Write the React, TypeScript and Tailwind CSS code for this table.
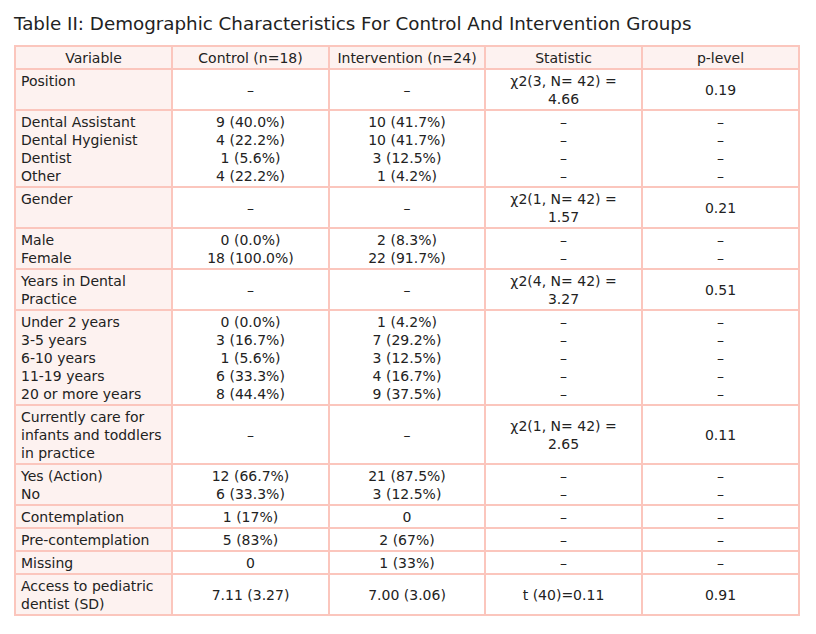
import React from "react";

type Row = {
  label: string[];
  control: string[];
  intervention: string[];
  statistic: string[];
  p: string[];
};

const D = "–";

const rows: Row[] = [
  { label: ["Position"], control: [D], intervention: [D], statistic: ["χ2(3, N= 42) =", "4.66"], p: ["0.19"] },
  {
    label: ["Dental Assistant", "Dental Hygienist", "Dentist", "Other"],
    control: ["9 (40.0%)", "4 (22.2%)", "1 (5.6%)", "4 (22.2%)"],
    intervention: ["10 (41.7%)", "10 (41.7%)", "3 (12.5%)", "1 (4.2%)"],
    statistic: [D, D, D, D],
    p: [D, D, D, D],
  },
  { label: ["Gender"], control: [D], intervention: [D], statistic: ["χ2(1, N= 42) =", "1.57"], p: ["0.21"] },
  {
    label: ["Male", "Female"],
    control: ["0 (0.0%)", "18 (100.0%)"],
    intervention: ["2 (8.3%)", "22 (91.7%)"],
    statistic: [D, D],
    p: [D, D],
  },
  { label: ["Years in Dental", "Practice"], control: [D], intervention: [D], statistic: ["χ2(4, N= 42) =", "3.27"], p: ["0.51"] },
  {
    label: ["Under 2 years", "3-5 years", "6-10 years", "11-19 years", "20 or more years"],
    control: ["0 (0.0%)", "3 (16.7%)", "1 (5.6%)", "6 (33.3%)", "8 (44.4%)"],
    intervention: ["1 (4.2%)", "7 (29.2%)", "3 (12.5%)", "4 (16.7%)", "9 (37.5%)"],
    statistic: [D, D, D, D, D],
    p: [D, D, D, D, D],
  },
  {
    label: ["Currently care for", "infants and toddlers", "in practice"],
    control: [D],
    intervention: [D],
    statistic: ["χ2(1, N= 42) =", "2.65"],
    p: ["0.11"],
  },
  {
    label: ["Yes (Action)", "No"],
    control: ["12 (66.7%)", "6 (33.3%)"],
    intervention: ["21 (87.5%)", "3 (12.5%)"],
    statistic: [D, D],
    p: [D, D],
  },
  { label: ["Contemplation"], control: ["1 (17%)"], intervention: ["0"], statistic: [D], p: [D] },
  { label: ["Pre-contemplation"], control: ["5 (83%)"], intervention: ["2 (67%)"], statistic: [D], p: [D] },
  { label: ["Missing"], control: ["0"], intervention: ["1 (33%)"], statistic: [D], p: [D] },
  {
    label: ["Access to pediatric", "dentist (SD)"],
    control: ["7.11 (3.27)"],
    intervention: ["7.00 (3.06)"],
    statistic: ["t (40)=0.11"],
    p: ["0.91"],
  },
];

const Lines = ({ items }: { items: string[] }) => (
  <>
    {items.map((t, i) => (
      <div key={i} className="whitespace-nowrap">{t}</div>
    ))}
  </>
);

const cell = "border-2 border-[#fbc6bd] px-[5px] pt-[2px] pb-[1px]";

export default function App() {
  return (
    <div
      className="bg-white text-[#222222] pl-[14px] pt-[12px]"
      style={{ fontFamily: '"DejaVu Sans", Verdana, sans-serif' }}
    >
      <h1 className="text-[18.3px] leading-[23px] mb-[10px]">
        Table II: Demographic Characteristics For Control And Intervention Groups
      </h1>
      <table className="table-fixed border-collapse w-[785px] text-[14px] leading-[18px]">
        <colgroup>
          <col className="w-[157px]" />
          <col className="w-[157px]" />
          <col className="w-[156px]" />
          <col className="w-[157px]" />
          <col className="w-[157px]" />
        </colgroup>
        <thead>
          <tr className="bg-[#fdf2f0]">
            <th className={`${cell} font-normal text-center`}>Variable</th>
            <th className={`${cell} font-normal text-center`}>Control (n=18)</th>
            <th className={`${cell} font-normal text-center`}>Intervention (n=24)</th>
            <th className={`${cell} font-normal text-center`}>Statistic</th>
            <th className={`${cell} font-normal text-center`}>p-level</th>
          </tr>
        </thead>
        <tbody>
          {rows.map((r, i) => (
            <tr key={i}>
              <td className={`${cell} bg-[#fdf2f0] align-top text-left`}>
                <Lines items={r.label} />
              </td>
              <td className={`${cell} align-middle text-center`}>
                <Lines items={r.control} />
              </td>
              <td className={`${cell} align-middle text-center`}>
                <Lines items={r.intervention} />
              </td>
              <td className={`${cell} align-middle text-center`}>
                <Lines items={r.statistic} />
              </td>
              <td className={`${cell} align-middle text-center`}>
                <Lines items={r.p} />
              </td>
            </tr>
          ))}
        </tbody>
      </table>
    </div>
  );
}
